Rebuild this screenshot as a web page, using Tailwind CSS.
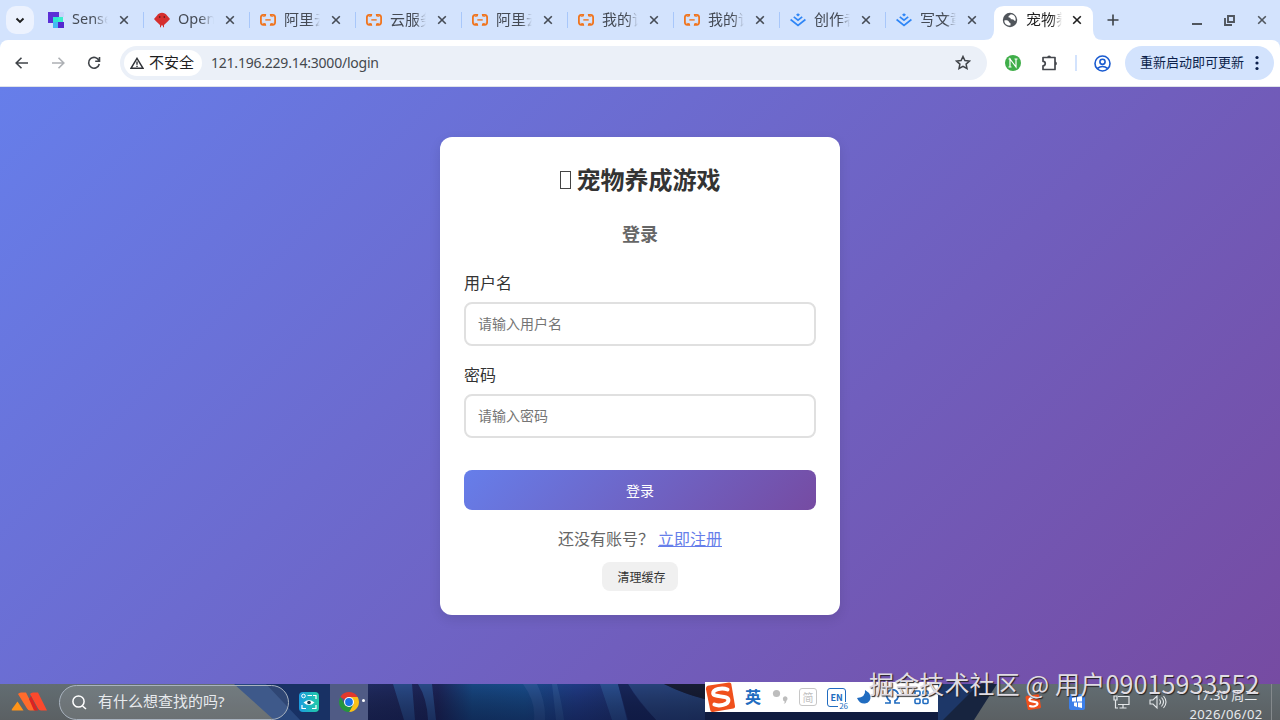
<!DOCTYPE html>
<html lang="zh-CN">
<head>
<meta charset="utf-8">
<title>宠物养成游戏</title>
<script src="https://cdn.jsdelivr.net/npm/@tailwindcss/browser@4"></script>
</head>
<body class="w-[1280px] h-[720px] overflow-hidden font-['Noto_Sans','Noto_Sans_CJK_SC',sans-serif] text-[#333]">
<svg class="hidden">
  <symbol id="x" viewBox="0 0 10 10"><path d="M1.2 1.2l7.6 7.6M8.800 1.200L1.200 8.800" stroke="currentColor" stroke-width="1.600" fill="none"/></symbol>
  <symbol id="ali" viewBox="0 0 16 16"><path d="M6 2.900H3.200A2.400 2.400 0 0 0 .9 5.300v5.200a2.400 2.400 0 0 0 2.300 2.300H6M10 2.900h2.800a2.400 2.400 0 0 1 2.300 2.400v5.200a2.400 2.400 0 0 1-2.300 2.300H10" fill="none" stroke="#f0751f" stroke-width="1.800"/><path d="M6.300 2l-.7 2.500L2 5zM6.300 13.700l-.7-2.500L2 10.800zM9.700 2l.7 2.500L14 5zM9.700 13.700l.7-2.500 3.600-.4z" fill="#f0751f"/><path d="M5.300 7.900h5.400" stroke="#f0751f" stroke-width="1.400"/></symbol>
  <symbol id="jj" viewBox="0 0 16 16"><path d="M8 1.200l2 1.600-2 1.600-2-1.600z" fill="#2f86f6"/><path d="M3.800 4.900L8 8.200l4.200-3.300M.6 7.500L8 13.300l7.400-5.800" fill="none" stroke="#2f86f6" stroke-width="1.700"/></symbol>
  <symbol id="sogou" viewBox="0 0 30 30"><path d="M4 3.500L24 .6q2-.2 2.300 1.500L30 24q.3 2-1.700 2.500L8 30q-2.300.3-2.800-2L1 7.500Q.6 4 4 3.500z" fill="#f0501c"/><path d="M22.500 7.500C17 5.300 8 7 8.200 11.300c.3 4.400 15 1.700 15.200 6.700.2 5-9.700 6.400-14 4.500" fill="none" stroke="#fff" stroke-width="4" stroke-linecap="round"/></symbol>
</svg>
<div class="relative flex flex-col w-[1280px] h-[720px]">

  <!-- Tab strip -->
  <header class="flex h-10 shrink-0 bg-[#d3e3fd] text-[15px] text-[#454b55]">
    <div class="w-[37px] shrink-0 pl-1.5 pt-1.5"><div class="grid place-items-center size-7 rounded-[10px] bg-[#ecf2fe]"><svg width="10" height="7" viewBox="0 0 10 7"><path d="M1.500 1.500L5 5l3.500-3.500" stroke="#1f1f1f" stroke-width="1.900" fill="none"/></svg></div></div>
    <div class="flex w-[106px] shrink-0 items-center pl-[11px] relative"><svg class="size-4 shrink-0" viewBox="0 0 16 16"><path d="M0 0h11v5H5v6H0z" fill="#5b2fd6"/><path d="M5 5h5v5H5z" fill="#2be8d2"/><path d="M11 0h5v5h-5z" fill="#c9d5fb"/><path d="M10 5h5v5h-5z" fill="#3aeecb"/><path d="M10 10h6v6h-6z" fill="#5428cf"/><path d="M5 10h5v6H5z" fill="#46b9f3"/></svg><span class="ml-2 w-9 -mt-0.5 overflow-hidden whitespace-nowrap text-[14.500px] mask-r-from-60% mask-r-to-100%">SenseCore</span><svg class="ml-[11px] size-[10px]"><use href="#x"/></svg><i class="absolute -right-px top-3 w-[1.500px] h-4 bg-[#a8c7fa]"></i></div>
    <div class="flex w-[106px] shrink-0 items-center pl-[11px] relative"><svg class="size-4 shrink-0" viewBox="0 0 16 16"><path d="M8 .7c2 0 3.800 1 5 2.800L16 7l-2.300 2.400L10 13v2.300H9V13.500H7v1.800H6V13L2.300 9.400 0 7l3-3.500C4.200 1.700 6 .7 8 .7z" fill="#d52f2f"/><circle cx="5.700" cy="5" r=".8" fill="#351919"/><circle cx="10.300" cy="5" r=".8" fill="#351919"/></svg><span class="ml-2 w-9 -mt-0.5 overflow-hidden whitespace-nowrap text-[14.500px] mask-r-from-60% mask-r-to-100%">OpenClaw</span><svg class="ml-[11px] size-[10px]"><use href="#x"/></svg><i class="absolute -right-px top-3 w-[1.500px] h-4 bg-[#a8c7fa]"></i></div>
    <div class="flex w-[106px] shrink-0 items-center pl-[11px] relative"><svg class="size-4 shrink-0"><use href="#ali"/></svg><span class="ml-2 w-9 -mt-0.5 overflow-hidden whitespace-nowrap mask-r-from-70% mask-r-to-100%">阿里云</span><svg class="ml-[11px] size-[10px]"><use href="#x"/></svg><i class="absolute -right-px top-3 w-[1.500px] h-4 bg-[#a8c7fa]"></i></div>
    <div class="flex w-[106px] shrink-0 items-center pl-[11px] relative"><svg class="size-4 shrink-0"><use href="#ali"/></svg><span class="ml-2 w-9 -mt-0.5 overflow-hidden whitespace-nowrap mask-r-from-70% mask-r-to-100%">云服务器</span><svg class="ml-[11px] size-[10px]"><use href="#x"/></svg><i class="absolute -right-px top-3 w-[1.500px] h-4 bg-[#a8c7fa]"></i></div>
    <div class="flex w-[106px] shrink-0 items-center pl-[11px] relative"><svg class="size-4 shrink-0"><use href="#ali"/></svg><span class="ml-2 w-9 -mt-0.5 overflow-hidden whitespace-nowrap mask-r-from-70% mask-r-to-100%">阿里云</span><svg class="ml-[11px] size-[10px]"><use href="#x"/></svg><i class="absolute -right-px top-3 w-[1.500px] h-4 bg-[#a8c7fa]"></i></div>
    <div class="flex w-[106px] shrink-0 items-center pl-[11px] relative"><svg class="size-4 shrink-0"><use href="#ali"/></svg><span class="ml-2 w-9 -mt-0.5 overflow-hidden whitespace-nowrap mask-r-from-70% mask-r-to-100%">我的订单</span><svg class="ml-[11px] size-[10px]"><use href="#x"/></svg><i class="absolute -right-px top-3 w-[1.500px] h-4 bg-[#a8c7fa]"></i></div>
    <div class="flex w-[106px] shrink-0 items-center pl-[11px] relative"><svg class="size-4 shrink-0"><use href="#ali"/></svg><span class="ml-2 w-9 -mt-0.5 overflow-hidden whitespace-nowrap mask-r-from-70% mask-r-to-100%">我的订单</span><svg class="ml-[11px] size-[10px]"><use href="#x"/></svg><i class="absolute -right-px top-3 w-[1.500px] h-4 bg-[#a8c7fa]"></i></div>
    <div class="flex w-[106px] shrink-0 items-center pl-[11px] relative"><svg class="size-4 shrink-0"><use href="#jj"/></svg><span class="ml-2 w-9 -mt-0.5 overflow-hidden whitespace-nowrap mask-r-from-70% mask-r-to-100%">创作者</span><svg class="ml-[11px] size-[10px]"><use href="#x"/></svg><i class="absolute -right-px top-3 w-[1.500px] h-4 bg-[#a8c7fa]"></i></div>
    <div class="flex w-[106px] shrink-0 items-center pl-[11px]"><svg class="size-4 shrink-0"><use href="#jj"/></svg><span class="ml-2 w-9 -mt-0.5 overflow-hidden whitespace-nowrap mask-r-from-70% mask-r-to-100%">写文章</span><svg class="ml-[11px] size-[10px]"><use href="#x"/></svg></div>
    <div class="relative flex w-[106px] shrink-0 items-center pl-[11px] text-[#1f1f1f]">
      <svg class="absolute -left-[7px] top-1.5" width="119" height="34"><path d="M0 34Q10 34 10 24V10Q10 0 20 0H99Q109 0 109 10V24Q109 34 119 34z" fill="#fff"/></svg>
      <svg class="relative size-4 shrink-0" viewBox="0 0 16 16"><circle cx="8" cy="8" r="7.200" fill="#50555b"/><path d="M2.300 8.400c2.700-.3 4.500.2 4.700 1.500.2 1.100 1.500.4 1.500 1.700V13.600C5 13.900 2.200 11.400 2.300 8.400zM8.700 2.300c-.2 1.300-2.200.9-2.200 2.400 0 1.400 2.200.4 2.200 2 0 1.500 2.500.1 3.300 1.500.4.700 1 .7 1.600.5C14.200 5 11.700 2.400 8.700 2.300z" fill="#fff"/></svg>
      <span class="relative ml-2 w-9 -mt-0.5 overflow-hidden whitespace-nowrap mask-r-from-70% mask-r-to-100%">宠物养成</span><svg class="relative ml-[10px] size-[10px]"><use href="#x"/></svg>
    </div>
    <svg class="mt-[14px] ml-[10px] shrink-0" width="12" height="12"><path d="M6 .5v11M.5 6h11" stroke="#3c4147" stroke-width="1.600"/></svg>
    <div class="ml-auto flex h-10 items-center pr-[13px] text-[#50565e]">
      <svg width="10" height="12"><path d="M0 10h10" stroke="currentColor" stroke-width="2"/></svg>
      <svg class="ml-[22px]" width="11" height="11"><path d="M4 1h6v6H4zM1 3v7h7" fill="none" stroke="currentColor" stroke-width="1.900"/></svg>
      <svg class="ml-[22px] size-[10px]"><use href="#x"/></svg>
    </div>
  </header>

  <!-- Address bar -->
  <div class="bg-[#d3e3fd] shrink-0"><div class="flex h-[47px] items-center bg-white rounded-t-lg border-b border-[#dfe3ea] pr-1.5 text-[#44484e]">
    <svg class="ml-[15px]" width="13" height="12"><path d="M6.500 .8L1.200 6l5.300 5.200M1.200 6H13" fill="none" stroke="#404449" stroke-width="1.600"/></svg>
    <svg class="ml-6" width="13" height="12"><path d="M6.500 .8L11.800 6l-5.300 5.200M11.800 6H0" fill="none" stroke="#adb0b4" stroke-width="1.600"/></svg>
    <svg class="ml-[22px]" width="14" height="14"><path d="M12 4.600A5.400 5.400 0 1 0 12.300 8M12.500 1v4.300H8.200" fill="none" stroke="#404449" stroke-width="1.600"/></svg>
    <div class="ml-[19px] flex h-[34px] w-[867px] items-center rounded-full bg-[#ebf0f8] pl-1 pr-4 mb-px">
      <div class="flex h-[26px] w-[78px] items-center rounded-full bg-white pl-1.5 text-[15px] text-[#1f1f1f]"><svg width="14" height="12" class="mr-[5px]"><path d="M7 1.300L13 11.300H1zM7 4.500v3.300M7 8.700v1.300" fill="none" stroke="#303338" stroke-width="1.400"/></svg><span class="whitespace-nowrap">不安全</span></div>
      <span class="ml-[9px] text-[14px] tracking-[-0.220px]">121.196.229.14:3000/login</span>
      <svg class="ml-auto" width="16" height="15" viewBox="0 0 16 15"><path d="M8 1.500l1.900 4.100 4.500.5-3.300 3 .9 4.400L8 11.300l-4 2.200.9-4.400-3.300-3 4.500-.5z" fill="none" stroke="#404449" stroke-width="1.500"/></svg>
    </div>
    <svg class="ml-[18px]" width="16" height="16"><circle cx="8" cy="8" r="8" fill="#3fae49"/><path d="M5 12V4l6 8V4M3.500 4H6M9.500 4h3M3.500 12h3" fill="none" stroke="#fff" stroke-width="1.200"/></svg>
    <svg class="ml-5" width="18" height="18" viewBox="0 0 18 18"><path d="M2 3.500h12v12H2v-3.700a2.200 2.200 0 0 0 0-4.500z" fill="none" stroke="#44474d" stroke-width="1.700" stroke-linejoin="round"/><path d="M6.200 3.500a1.900 1.900 0 0 1 3.800 0zM14 7.500a1.900 1.900 0 0 1 0 3.800z" fill="#44474d"/></svg>
    <i class="ml-4 h-4 w-[2px] bg-[#d3e3fd]"></i>
    <svg class="ml-[17px] shrink-0" width="17" height="17"><g fill="none" stroke="#1a5bd0" stroke-width="1.600"><circle cx="8.500" cy="8.500" r="7.500"/><circle cx="8.500" cy="6.800" r="2.600"/><path d="M3.300 13.500q5.200-4 10.400 0"/></g></svg>
    <div class="ml-auto mb-px flex h-[34px] w-[149px] items-center rounded-full bg-[#d3e3fd] pl-[15px] text-[13px] text-[#0b1f4b] whitespace-nowrap"><span class="pt-px">重新启动即可更新</span><svg class="ml-[11px]" width="4" height="16"><g fill="#0b1f4b"><circle cx="2" cy="2.500" r="1.600"/><circle cx="2" cy="8" r="1.600"/><circle cx="2" cy="13.500" r="1.600"/></g></svg></div>
  </div></div>

  <!-- Login page -->
  <main class="flex h-[597px] shrink-0 items-start justify-center bg-[linear-gradient(135deg,#667eea_0%,#764ba2_100%)] pt-[50px] font-['Noto_Sans_CJK_SC',sans-serif]">
    <section class="flex h-[478px] w-[400px] flex-col rounded-xl bg-white px-6 pt-6 shadow-[0_4px_12px_rgba(0,0,0,0.1)]">
      <h1 class="flex h-9 items-center justify-center text-2xl font-bold"><span class="mr-[6px] mt-0.5 h-[18px] w-[11px] border border-[#444]"></span>宠物养成游戏</h1>
      <h2 class="mt-[23px] h-[27px] text-center text-lg leading-[27px] font-bold text-[#666]">登录</h2>
      <label class="mt-[23px] h-6 text-base leading-6">用户名</label>
      <input class="mt-2 h-11 rounded-lg border-2 border-[#e0e0e0] px-3 pb-0.5 text-sm placeholder:text-[#757575]" placeholder="请输入用户名">
      <label class="mt-4 h-6 text-base leading-6">密码</label>
      <input class="mt-2 h-11 rounded-lg border-2 border-[#e0e0e0] px-3 pb-0.5 text-sm placeholder:text-[#757575]" placeholder="请输入密码">
      <button class="mt-8 h-10 shrink-0 rounded-lg bg-[linear-gradient(135deg,#667eea_0%,#764ba2_100%)] text-sm text-white">登录</button>
      <p class="mt-4 flex h-6 justify-center text-base leading-6 text-[#666]"><span class="w-[100px] whitespace-nowrap">还没有账号？</span><a class="text-[#667eea] underline">立即注册</a></p>
      <button class="mt-3 h-[29px] w-[76px] self-center rounded-lg bg-[#f0f0f0] pt-px pl-[3px] text-xs">清理缓存</button>
    </section>
  </main>

  <!-- Taskbar -->
  <footer class="relative flex h-9 shrink-0 items-center bg-[#142451] text-[#e7eaed]">
    <svg class="absolute inset-0" width="1280" height="36" viewBox="0 0 1280 36">
      <defs>
        <linearGradient id="g1" x1="0" x2="0" y1="0" y2="1"><stop stop-color="#626d72"/><stop offset="1" stop-color="#5b6063"/></linearGradient>
        <linearGradient id="g2"><stop stop-color="#202b60"/><stop offset=".2" stop-color="#1c2458"/><stop offset=".3" stop-color="#174681"/><stop offset=".45" stop-color="#184a88"/><stop offset=".6" stop-color="#203a84"/><stop offset=".85" stop-color="#1e2c61"/><stop offset="1" stop-color="#172344"/></linearGradient>
        <linearGradient id="g3" x1="0" x2="0" y1="0" y2="1"><stop stop-color="#000" stop-opacity="0"/><stop offset="1" stop-color="#080d2b" stop-opacity=".45"/></linearGradient>
      </defs>
      <path d="M0 0h240l42 36H0z" fill="url(#g1)"/>
      <path d="M234 0h96v36h-56z" fill="#28477d"/><path d="M266 0h64v36h-30z" fill="#183164"/>
      <path d="M330 0h38v36h-38z" fill="#505b85"/>
      <path d="M368 0h348v36H368z" fill="url(#g2)"/>
      <path d="M393 0h19l3 36h-11zM418 0h14l4 36h-8q-1-22-10-36zM523 0h14q9 18 8 36h-11q2-18-11-36zM552 0h5q5 20 7 36h-8zM600 0h18l9 36h-15z" fill="#2d5595" opacity=".75"/>
      <path d="M664 0q26 13 54 18v18h-62Q638 16 628 0z" fill="#29477f" opacity=".8"/>
      <path d="M664 0h41v15Q684 10 664 0z" fill="#171d35"/>
      <path d="M628 0q10 18 28 36h-28q-6-22-10-36z" fill="#17265b"/>
      <path d="M368 0h348v36H368z" fill="url(#g3)"/>
      <path d="M705 0h235v36H705z" fill="#101c40"/>
      <path d="M938 0h65l-29 36h-36z" fill="#17243f"/><path d="M938 0h41l-36 36h-5z" fill="#1d3768"/>
      <path d="M997 0h283v36H974z" fill="url(#g1)"/>
      <path d="M1271.500 0v36" stroke="#84898c"/>
    </svg>
    <svg class="relative ml-[11px] shrink-0" width="37" height="20"><path d="M6.500 9.500l6 9H1.500Q0 18.500 1 17z" fill="#ff9418"/><path d="M7 2q1-1.500 3-1.500h5L24 18.500h-5q-2 0-3-2z" fill="#ff6b2b"/><path d="M19 2q1-1.500 3-1.500h5L36 18.500h-6q-2 0-3-2z" fill="#fc492d"/><path d="M18 7l2-3 7 14.500h-4z" fill="#dc2222"/></svg>
    <div class="relative ml-[11px] flex h-[35px] w-[230px] shrink-0 items-center rounded-full border border-[#a9b3bf] bg-white/10 pl-3 text-[15px]"><svg width="16" height="16"><circle cx="6.500" cy="7.500" r="5.600" fill="none" stroke="#fff" stroke-width="1.500"/><path d="M10.500 12l3.500 3" stroke="#fff" stroke-width="1.600"/></svg><span class="ml-[10px] -mt-0.5 whitespace-nowrap">有什么想查找的吗?</span></div>
    <svg class="relative ml-2.5 shrink-0" width="20" height="20"><defs><linearGradient id="c"><stop stop-color="#1b9be0"/><stop offset="1" stop-color="#22cba7"/></linearGradient></defs><rect width="20" height="20" rx="4" fill="url(#c)"/><path d="M8.500 3.500H13M14 3.500h3V7M3 13v3.500h4M13 16.500h4V13" fill="none" stroke="#fff" stroke-width="1.200"/><circle cx="4.500" cy="4" r="1.800" fill="none" stroke="#fff"/><path d="M4.500 10.500q5.500-5 11 0-5.500 5-11 0z" fill="#fff"/><circle cx="10" cy="10.500" r="1.800" fill="#173d55"/></svg>
    <svg class="relative ml-5 shrink-0" width="20" height="20" viewBox="0 0 20 20"><path d="M10 10L1.340 5A10 10 0 0 1 18.660 5z" fill="#e2382c"/><path d="M10 5h8.660A10 10 0 0 1 10 20l4.300-7.500z" fill="#fbc116"/><path d="M10 20A10 10 0 0 1 1.340 5l4.360 7.500 8.600 0z" fill="#25963f"/><circle cx="10" cy="10" r="5" fill="#fff"/><circle cx="10" cy="10" r="3.900" fill="#1a73e8"/></svg>
    <i class="relative ml-[3px] mb-1 size-[3px] rounded-full bg-white"></i>
    <div class="relative ml-auto flex h-9 shrink-0 items-center pr-4">
      <svg class="size-4"><use href="#sogou"/></svg>
      <svg class="ml-7" width="16" height="16"><rect width="16" height="16" rx="2" fill="#3c7fe9"/><path d="M3 4l4-1v4.500H3zM8 3l5-1v5.500H8zM5 8.500h3V13l-3-1zM9 8.500h4V14l-4-1z" fill="#fff"/></svg>
      <svg class="ml-7" width="17" height="16"><path d="M5 2.500h11v8H5M10 11v3M6.500 14h7M1 2h3v4H1zM2.500 6v8H5" fill="none" stroke="#e4e7e9" stroke-width="1.200"/></svg>
      <svg class="ml-[19px]" width="18" height="16"><path d="M1 6h3l4-4v12l-4-4H1zM10.500 5.500q2 2.500 0 5M12.500 3.500q4 4.500 0 9M14.500 2q5 6 0 12" fill="none" stroke="#e4e7e9" stroke-width="1.100"/></svg>
      <div class="ml-[21px] mt-[5px] flex w-[76px] flex-col items-center text-[13px] leading-5 whitespace-nowrap"><span>17:30 周二</span><span class="tracking-[0.400px] -mt-px">2026/06/02</span></div>
    </div>
  </footer>

  <!-- Floating input-method bar -->
  <div class="absolute left-[705px] top-[682px] flex h-[30px] w-[233px] items-center bg-white text-[#216cc0] font-['Noto_Sans_CJK_SC',sans-serif]">
    <svg class="size-[30px] shrink-0"><use href="#sogou"/></svg>
    <span class="ml-2.5 -mt-0.5 text-base font-bold">英</span>
    <svg class="ml-[11px]" width="17" height="17"><circle cx="4.500" cy="4.500" r="3.600" fill="#bdbdbd"/><path d="M11 9a2.300 2.300 0 1 1 3.600 2.500Q14.500 14 11.500 15q1.200-1 1.200-2.500Q10.500 12 11 9z" fill="#bdbdbd"/></svg>
    <span class="ml-[10px] grid size-[18px] place-items-center rounded-[3px] border-[1.500px] border-[#c7c7c7] text-[11px] leading-none text-[#c1c1c1]">简</span>
    <span class="relative ml-2.5 grid size-[19px] place-items-center rounded-[3px] border-[1.500px] border-[#216cc0] text-[9px] leading-none font-bold">EN<small class="absolute -right-[3px] -bottom-[3px] bg-white pl-px text-[8px] leading-[7px] font-normal">26</small></span>
    <svg class="ml-[11px]" width="14" height="14"><path d="M8 0q1 7-8 8 2.500 6 8 5.500Q14 12.500 13.500 6 12 2 8 0z" fill="#216cc0"/></svg>
    <svg class="ml-[14px]" width="15" height="16"><path d="M0 14h5v-2.300A5.800 5.800 0 1 1 10 11.700V14h5" fill="none" stroke="#216cc0" stroke-width="1.700"/></svg>
    <svg class="ml-[14px]" width="15" height="15"><g fill="none" stroke="#216cc0" stroke-width="1.600"><rect x="1" y="1" width="5" height="4.500" rx="1"/><rect x="9" y="1" width="5" height="4.500" rx="1"/><rect x="1" y="9" width="5" height="4.500" rx="1"/><rect x="9" y="9" width="5" height="4.500" rx="1"/></g></svg>
  </div>

  <!-- Author watermark -->
  <div class="absolute left-[869px] top-[665px] whitespace-nowrap font-['Noto_Sans_CJK_SC',sans-serif] text-[25px] leading-9 tracking-[0.140px] text-[#e0dce3] text-shadow-[1px_1px_1px_#222]">掘金技术社区 @ 用户09015933552</div>
</div>
</body>
</html>
